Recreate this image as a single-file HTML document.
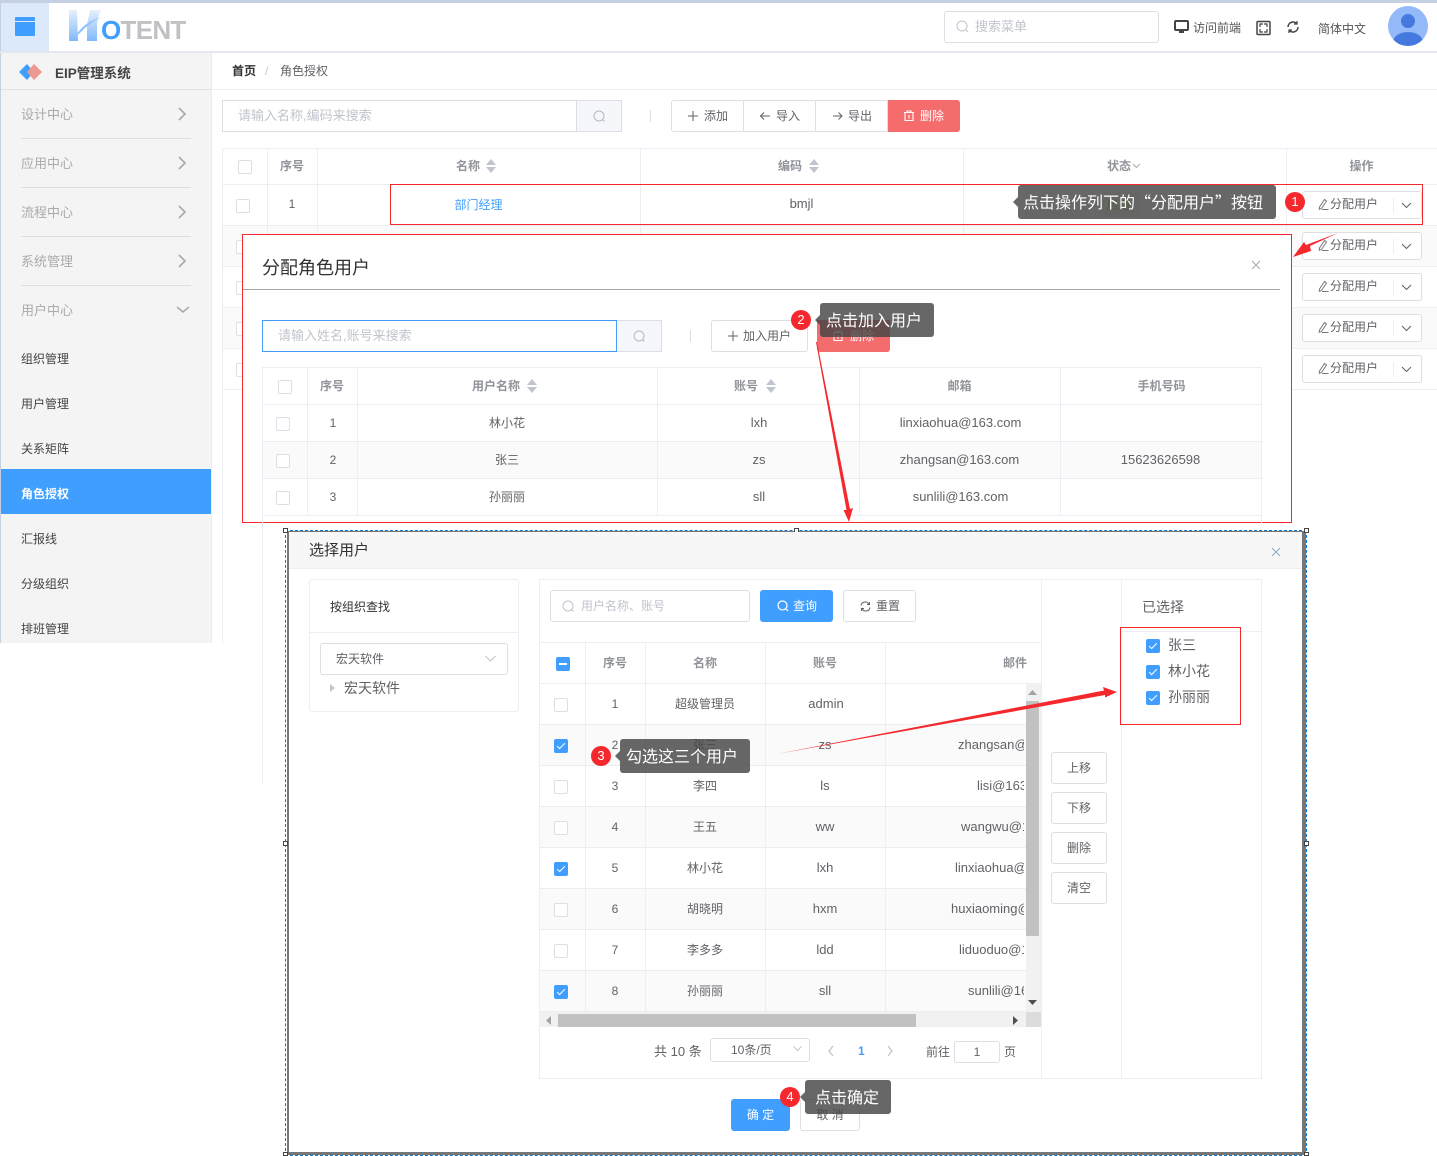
<!DOCTYPE html>
<html lang="zh"><head><meta charset="utf-8"><title>角色授权</title>
<style>
html,body{margin:0;padding:0;background:#fff}
#p{position:relative;width:1437px;height:1156px;overflow:hidden;background:#fff;font:13px/20px "Liberation Sans","Noto Sans CJK SC",sans-serif;color:#606266}
#p div,#p span.a{position:absolute;box-sizing:border-box}
.t{white-space:nowrap}
.c{text-align:center;white-space:nowrap}
.b{font-weight:bold;color:#909399}
.h{background:#ebeef5;height:1px}
.v{background:#ebeef5;width:1px}
.ck{width:14px;height:14px;border:1px solid #dcdfe6;border-radius:2px;background:#fff}
.on{background:#409eff;border-color:#409eff}
.on:after{content:"";position:absolute;left:4px;top:1px;width:3px;height:7px;border:solid #fff;border-width:0 1px 1px 0;transform:rotate(45deg)}
.btn{border:1px solid #dcdfe6;border-radius:3px;background:#fff;text-align:center;white-space:nowrap}
.tip{background:rgba(70,70,70,.82);color:#fff;border-radius:3px;font:16px/32px "Noto Sans CJK SC",sans-serif;white-space:nowrap;padding-left:6px}
.tip:before{content:"";position:absolute;left:-5px;top:50%;margin-top:-5px;border:5px solid transparent;border-left:0;border-right-color:rgba(70,70,70,.82)}
.num{width:20px;height:20px;border-radius:50%;background:#f5282d;color:#fff;text-align:center;line-height:20px;font-size:13px}
.red{border:1px solid #f5282d}
svg{position:absolute;overflow:visible}
.sort{width:10px;height:14px}
.sort:before{content:"";position:absolute;left:0;top:0;border:5px solid transparent;border-top:0;border-bottom:6px solid #c0c4cc}
.sort:after{content:"";position:absolute;left:0;top:8px;border:5px solid transparent;border-bottom:0;border-top:6px solid #c0c4cc}
.ob{left:1302px;width:120px;height:28px;border:1px solid #dcdfe6;border-radius:3px;background:#fff}
</style></head><body><div id="p">

<!-- top -->
<div style="left:0;top:0;width:1437px;height:3px;background:#c5d0e3"></div>
<div style="left:0;top:3px;width:1px;height:640px;background:#c5d0e3"></div>
<div style="left:1px;top:3px;width:48px;height:48px;background:#dce9fb"></div>
<div style="left:15px;top:17px;width:20px;height:19px;background:#409eff;border-radius:1px"></div>
<div style="left:15px;top:21px;width:20px;height:1px;background:#dce9fb"></div>
<svg style="left:68px;top:9px" width="34" height="33" viewBox="0 0 34 33"><defs><linearGradient id="g" x1="0" y1="0" x2="0" y2="1"><stop offset="0" stop-color="#e6f0fc"/><stop offset="1" stop-color="#7fb9fa"/></linearGradient></defs><path d="M1 32V1h8l1 31z" fill="url(#g)"/><path d="M19 32V15q2-8 3-14h11q-3 6-4 14v17z" fill="url(#g)"/><path d="M8 27Q14 14 34 8 22 13 12 24z" fill="#8fc2fb"/></svg>
<div class="t" style="left:101px;top:12px;line-height:36px;font-size:26px;font-weight:bold;color:#bfc1c4;letter-spacing:-.7px"><span style="color:#409eff">O</span>TENT</div>
<div style="left:0;top:51px;width:1437px;height:2px;background:#e4e7ed"></div>

<div style="left:944px;top:11px;width:215px;height:32px;border:1px solid #dcdfe6;border-radius:3px"></div>
<svg style="left:956px;top:20px" width="14" height="14" fill="none" stroke="#c0c4cc"><circle cx="6" cy="6" r="5"/><path d="M10 10l2 2"/></svg>
<div class="t" style="left:975px;top:17px;color:#c0c4cc">搜索菜单</div>
<svg style="left:1174px;top:19px" width="16" height="16" fill="none"><rect x="1" y="2" width="13" height="9" rx="1" stroke="#444" stroke-width="2"/><path d="M5 13h5" stroke="#444" stroke-width="2"/></svg>
<div class="t" style="left:1193px;top:18px;font-size:12px;color:#555">访问前端</div>
<svg style="left:1256px;top:20px" width="16" height="16" fill="none" stroke="#444"><rect x="1" y="1.500" width="13" height="13" rx="1" stroke-width="1.500"/><path d="M4 7V4h3M11 7V4H8M4 9v3h3M11 9v3H8" stroke-width="1.200"/></svg>
<svg style="left:1286px;top:20px" width="15" height="15" fill="none" stroke="#444" stroke-width="1.500"><path d="M2 7a5 5 0 0 1 9-3M12 7a5 5 0 0 1-9 3"/><path d="M11 1v3H8M3 13v-3h3" stroke-width="1.200"/></svg>
<div class="t" style="left:1318px;top:19px;font-size:12px;color:#555">简体中文</div>
<svg style="left:1388px;top:6px" width="40" height="40" viewBox="0 0 40 40"><clipPath id="av"><circle cx="20" cy="20" r="20"/></clipPath><circle cx="20" cy="20" r="20" fill="#93b9f8"/><g clip-path="url(#av)" fill="#4579e0"><circle cx="20" cy="15" r="7"/><ellipse cx="20" cy="36" rx="15" ry="10"/></g></svg>

<!-- sidebar -->
<div style="left:1px;top:53px;width:210px;height:590px;background:#f4f4f4"></div>
<div style="left:211px;top:53px;width:1px;height:590px;background:#e9ecf2"></div>
<div style="left:1px;top:89px;width:210px;height:1px;background:#dfe1e6"></div>
<svg style="left:18px;top:63px" width="26" height="18" viewBox="0 0 26 18"><path d="M1 9l8-8 7 8-7 8z" fill="#409eff"/><path d="M9 9l7-8 8 8-8 8z" fill="#ec9a90"/></svg>
<div class="t" style="left:55px;top:64px;font-size:13.500px;font-weight:bold;color:#444">EIP管理系统</div>
<div class="t" style="left:21px;top:105px;color:#aaa">设计中心</div>
<div class="t" style="left:21px;top:154px;color:#aaa">应用中心</div>
<div class="t" style="left:21px;top:203px;color:#aaa">流程中心</div>
<div class="t" style="left:21px;top:252px;color:#aaa">系统管理</div>
<div class="t" style="left:21px;top:301px;color:#aaa">用户中心</div>
<div style="left:21px;top:138px;width:170px;height:1px;background:#dedede"></div>
<div style="left:21px;top:187px;width:170px;height:1px;background:#dedede"></div>
<div style="left:21px;top:236px;width:170px;height:1px;background:#dedede"></div>
<div style="left:21px;top:285px;width:170px;height:1px;background:#dedede"></div>
<svg style="left:177px;top:107px" width="12" height="210" fill="none" stroke="#aaa" stroke-width="1.600"><path d="M2 1l6 6-6 6M2 50l6 6-6 6M2 99l6 6-6 6M2 148l6 6-6 6M0 200l6 5 6-5"/></svg>
<div class="t" style="left:21px;top:349px;font-size:12px;color:#444">组织管理</div>
<div class="t" style="left:21px;top:394px;font-size:12px;color:#444">用户管理</div>
<div class="t" style="left:21px;top:439px;font-size:12px;color:#444">关系矩阵</div>
<div style="left:1px;top:469px;width:210px;height:45px;background:#409eff"></div>
<div class="t" style="left:21px;top:484px;font-size:12px;color:#fff;font-weight:bold">角色授权</div>
<div class="t" style="left:21px;top:529px;font-size:12px;color:#444">汇报线</div>
<div class="t" style="left:21px;top:574px;font-size:12px;color:#444">分级组织</div>
<div class="t" style="left:21px;top:619px;font-size:12px;color:#444">排班管理</div>

<!-- breadcrumb -->
<div style="left:212px;top:89px;width:1225px;height:1px;background:#ebeef5"></div>
<div class="t" style="left:232px;top:61px;font-size:12px;font-weight:bold;color:#303133">首页</div>
<div class="t" style="left:265px;top:61px;font-size:12px;color:#c0c4cc">/</div>
<div class="t" style="left:280px;top:61px;font-size:12px;color:#606266">角色授权</div>

<!-- toolbar -->
<div style="left:222px;top:100px;width:400px;height:32px;border:1px solid #dcdfe6"></div>
<div style="left:576px;top:100px;width:46px;height:32px;border:1px solid #dcdfe6;background:#f5f7fa"></div>
<svg style="left:593px;top:110px" width="14" height="14" fill="none" stroke="#b5b9c0"><circle cx="6" cy="6" r="5"/><path d="M9.500 9.500l2 2"/></svg>
<div class="t" style="left:238px;top:106px;color:#c0c4cc">请输入名称,编码来搜索</div>
<div style="left:650px;top:110px;width:1px;height:12px;background:#dcdfe6"></div>
<div class="btn" style="left:671px;top:100px;width:73px;height:32px;border-radius:3px 0 0 3px"></div>
<div class="btn" style="left:743px;top:100px;width:73px;height:32px;border-radius:0"></div>
<div class="btn" style="left:815px;top:100px;width:73px;height:32px;border-radius:0"></div>
<div style="left:888px;top:100px;width:72px;height:32px;background:#f56c6c;border-radius:0 3px 3px 0"></div>
<div class="t" style="left:704px;top:106px;font-size:12px">添加</div>
<div class="t" style="left:776px;top:106px;font-size:12px">导入</div>
<div class="t" style="left:848px;top:106px;font-size:12px">导出</div>
<div class="t" style="left:920px;top:106px;font-size:12px;color:#fff">删除</div>
<svg style="left:0;top:0" width="1437" height="400" fill="none" stroke="#606266"><path d="M693 111v10M688 116h10M770 116h-9M764 112.500l-3.500 3.500 3.500 3.500M833 116h9M838.500 112.500l3.500 3.500-3.500 3.500"/><path d="M904 112.500h10M907 112.500v-1.500h4v1.500M905 113v7.500h8V113M909 115v3.500" stroke="#fff" stroke-width="1.100"/></svg>

<!-- main table -->
<div class="h" style="left:222px;top:148px;width:1215px"></div>
<div class="h" style="left:222px;top:184px;width:1215px"></div>
<div style="left:222px;top:226px;width:1215px;height:41px;background:#fafafa"></div>
<div style="left:222px;top:308px;width:1215px;height:41px;background:#fafafa"></div>
<div class="h" style="left:222px;top:225px;width:1215px"></div>
<div class="h" style="left:222px;top:266px;width:1215px"></div>
<div class="h" style="left:222px;top:307px;width:1215px"></div>
<div class="h" style="left:222px;top:348px;width:1215px"></div>
<div class="h" style="left:222px;top:389px;width:1215px"></div>
<div class="v" style="left:222px;top:148px;height:495px"></div>
<div class="v" style="left:267px;top:148px;height:241px"></div>
<div class="v" style="left:317px;top:148px;height:241px"></div>
<div class="v" style="left:640px;top:148px;height:86px"></div>
<div class="v" style="left:963px;top:148px;height:86px"></div>
<div class="v" style="left:1286px;top:148px;height:241px"></div>
<div class="ck" style="left:238px;top:160px"></div>
<div class="ck" style="left:236px;top:199px"></div>
<div class="ck" style="left:236px;top:240px"></div>
<div class="ck" style="left:236px;top:281px"></div>
<div class="ck" style="left:236px;top:322px"></div>
<div class="ck" style="left:236px;top:363px"></div>
<div class="c b" style="left:267px;top:156px;width:50px;font-size:12px">序号</div>
<div class="c b" style="left:455px;top:156px;width:26px;font-size:12px">名称</div>
<div class="sort" style="left:486px;top:159px"></div>
<div class="c b" style="left:777px;top:156px;width:26px;font-size:12px">编码</div>
<div class="sort" style="left:809px;top:159px"></div>
<div class="c b" style="left:1106px;top:156px;width:26px;font-size:12px">状态</div>
<svg style="left:1132px;top:163px" width="9" height="6" fill="none" stroke="#aaa"><path d="M1 1l3.500 3.500L8 1"/></svg>
<div class="c b" style="left:1286px;top:156px;width:151px;font-size:12px">操作</div>
<div class="c" style="left:267px;top:194px;width:50px;font-size:12px">1</div>
<div class="c" style="left:317px;top:195px;width:323px;color:#409eff;font-size:12px">部门经理</div>
<div class="c" style="left:640px;top:194px;width:323px">bmjl</div>
<div style="left:1098px;top:193px;width:41px;height:24px;background:#f0f9eb;border-radius:3px"></div>
<div class="c" style="left:1098px;top:193px;width:41px;line-height:24px;color:#67c23a;font-size:12px">启用</div>
<div style="left:1100px;top:232px;width:38px;height:2px;background:#f0f9eb"></div>

<div class="ob" style="top:191px"></div><div class="ob" style="top:232px"></div><div class="ob" style="top:273px"></div><div class="ob" style="top:314px"></div><div class="ob" style="top:355px"></div>
<div class="t" style="left:1330px;top:194px;font-size:12px">分配用户</div>
<div class="t" style="left:1330px;top:235px;font-size:12px">分配用户</div>
<div class="t" style="left:1330px;top:276px;font-size:12px">分配用户</div>
<div class="t" style="left:1330px;top:317px;font-size:12px">分配用户</div>
<div class="t" style="left:1330px;top:358px;font-size:12px">分配用户</div>
<svg style="left:1318px;top:198px" width="12" height="180" fill="none" stroke="#777"><path d="M1.500 9l5-7.500 2 1.500-5 7.500-2.200 .8zM4 11.500h6.500"/><path transform="translate(0 41)" d="M1.500 9l5-7.500 2 1.500-5 7.500-2.200 .8zM4 11.500h6.500"/><path transform="translate(0 82)" d="M1.500 9l5-7.500 2 1.500-5 7.500-2.200 .8zM4 11.500h6.500"/><path transform="translate(0 123)" d="M1.500 9l5-7.500 2 1.500-5 7.500-2.200 .8zM4 11.500h6.500"/><path transform="translate(0 164)" d="M1.500 9l5-7.500 2 1.500-5 7.500-2.200 .8zM4 11.500h6.500"/></svg>
<svg style="left:1393px;top:196px" width="24" height="180" fill="none"><g stroke="#ebeef5"><path d="M.5 2v15M.5 43v15M.5 84v15M.5 125v15M.5 166v15"/></g><g stroke="#606266"><path d="M9 7l4.500 4.500L18 7M9 48l4.500 4.500L18 48M9 89l4.500 4.500L18 89M9 130l4.500 4.500L18 130M9 171l4.500 4.500L18 171"/></g></svg>

<div class="red" style="left:390px;top:184px;width:1033px;height:41px"></div>
<div class="tip" style="left:1018px;top:185px;width:258px;height:34px;padding-left:5px">点击操作列下的“分配用户”按钮</div>
<div class="num" style="left:1285px;top:192px">1</div>

<!-- dialog 1 -->
<div style="left:242px;top:234px;width:1050px;height:289px;background:#fff;border:1px solid #f5282d"></div>
<div style="left:1281px;top:235px;width:10px;height:287px;background:#fff"></div>
<div style="left:243px;top:289px;width:1037px;height:1px;background:#a6a6a6"></div>
<div class="t" style="left:262px;top:256px;font-size:18px;line-height:24px;color:#303133">分配角色用户</div>
<svg style="left:1252px;top:261px" width="8" height="8" stroke="#a9a9a9" fill="none"><path d="M0 0l8 8M8 0L0 8"/></svg>
<div style="left:262px;top:320px;width:355px;height:32px;border:1px solid #409eff"></div>
<div style="left:617px;top:320px;width:45px;height:32px;border:1px solid #dcdfe6;border-left:0;background:#f5f7fa"></div>
<svg style="left:633px;top:330px" width="14" height="14" fill="none" stroke="#b5b9c0"><circle cx="6" cy="6" r="5"/><path d="M9.500 9.500l2 2"/></svg>
<div class="t" style="left:278px;top:326px;color:#c0c4cc">请输入姓名,账号来搜索</div>
<div style="left:690px;top:330px;width:1px;height:12px;background:#dcdfe6"></div>
<div class="btn" style="left:711px;top:320px;width:97px;height:32px"></div>
<div class="t" style="left:743px;top:326px;font-size:12px">加入用户</div>
<svg style="left:728px;top:331px" width="10" height="10" fill="none" stroke="#606266"><path d="M5 0v10M0 5h10"/></svg>
<div style="left:817px;top:320px;width:73px;height:32px;background:#f56c6c;border-radius:0 0 3px 3px"></div>
<div class="t" style="left:850px;top:326px;font-size:12px;color:#fff">删除</div>
<svg style="left:833px;top:330px" width="11" height="11" fill="none" stroke="#fff" stroke-width="1.100"><path d="M0 2.500h10M3 2.500V1h4v1.500M1 3v7.500h8V3M5 5v3.500"/></svg>
<div class="tip" style="left:820px;top:303px;width:114px;height:34px">点击加入用户</div>
<div class="num" style="left:791px;top:310px">2</div>

<div class="h" style="left:262px;top:367px;width:1000px"></div>
<div class="h" style="left:262px;top:404px;width:1000px"></div>
<div style="left:262px;top:442px;width:1000px;height:36px;background:#fafafa"></div>
<div class="h" style="left:262px;top:441px;width:1000px"></div>
<div class="h" style="left:262px;top:478px;width:1000px"></div>
<div class="h" style="left:262px;top:515px;width:1000px"></div>
<div class="v" style="left:262px;top:367px;height:416px"></div>
<div class="v" style="left:307px;top:367px;height:148px"></div>
<div class="v" style="left:357px;top:367px;height:148px"></div>
<div class="v" style="left:657px;top:367px;height:148px"></div>
<div class="v" style="left:859px;top:367px;height:148px"></div>
<div class="v" style="left:1060px;top:367px;height:148px"></div>
<div class="v" style="left:1261px;top:367px;height:156px"></div>
<div class="ck" style="left:278px;top:380px"></div>
<div class="ck" style="left:276px;top:417px"></div>
<div class="ck" style="left:276px;top:454px"></div>
<div class="ck" style="left:276px;top:491px"></div>
<div class="c b" style="left:307px;top:376px;width:50px;font-size:12px">序号</div>
<div class="c b" style="left:470px;top:376px;width:52px;font-size:12px">用户名称</div>
<div class="sort" style="left:527px;top:379px"></div>
<div class="c b" style="left:733px;top:376px;width:26px;font-size:12px">账号</div>
<div class="sort" style="left:766px;top:379px"></div>
<div class="c b" style="left:859px;top:376px;width:201px;font-size:12px">邮箱</div>
<div class="c b" style="left:1061px;top:376px;width:201px;font-size:12px">手机号码</div>
<div class="c" style="left:308px;top:413px;width:50px;font-size:12px">1</div><div class="c" style="left:357px;top:413px;width:300px;font-size:12px">林小花</div><div class="c" style="left:658px;top:413px;width:202px">lxh</div><div class="c" style="left:860px;top:413px;width:201px">linxiaohua@163.com</div>
<div class="c" style="left:308px;top:450px;width:50px;font-size:12px">2</div><div class="c" style="left:357px;top:450px;width:300px;font-size:12px">张三</div><div class="c" style="left:658px;top:450px;width:202px">zs</div><div class="c" style="left:859px;top:450px;width:201px">zhangsan@163.com</div><div class="c" style="left:1060px;top:450px;width:201px">15623626598</div>
<div class="c" style="left:308px;top:487px;width:50px;font-size:12px">3</div><div class="c" style="left:357px;top:487px;width:300px;font-size:12px">孙丽丽</div><div class="c" style="left:658px;top:487px;width:202px">sll</div><div class="c" style="left:860px;top:487px;width:201px">sunlili@163.com</div>

<!-- dialog 2 -->
<div style="left:287px;top:531px;width:1019px;height:624px;background:#fff;border:solid #777;border-width:1px 4px 3px 2px"></div>
<div style="left:285px;top:530px;width:1022px;height:626px;border:1px dashed #0a78d2"></div>
<div style="left:283px;top:528px;width:5px;height:5px;border:1px solid #444;background:#fff"></div>
<div style="left:794px;top:528px;width:5px;height:5px;border:1px solid #444;background:#fff"></div>
<div style="left:1304px;top:528px;width:5px;height:5px;border:1px solid #444;background:#fff"></div>
<div style="left:283px;top:841px;width:5px;height:5px;border:1px solid #444;background:#fff"></div>
<div style="left:1304px;top:841px;width:5px;height:5px;border:1px solid #444;background:#fff"></div>
<div style="left:283px;top:1152px;width:5px;height:4px;border:1px solid #444;background:#fff"></div>
<div style="left:1304px;top:1152px;width:5px;height:4px;border:1px solid #444;background:#fff"></div>
<div style="left:289px;top:532px;width:1013px;height:37px;background:#f7f7f7;border-bottom:1px solid #ebeef5"></div>
<div class="t" style="left:309px;top:541px;font-size:15px;color:#303133">选择用户</div>
<svg style="left:1272px;top:548px" width="8" height="8" stroke="#8fa9c9" fill="none"><path d="M0 0l8 8M8 0L0 8"/></svg>

<div style="left:309px;top:579px;width:210px;height:133px;border:1px solid #ebeef5;border-radius:3px"></div>
<div class="h" style="left:310px;top:632px;width:208px"></div>
<div class="t" style="left:330px;top:597px;font-size:12px;color:#303133">按组织查找</div>
<div style="left:320px;top:643px;width:188px;height:32px;border:1px solid #dcdfe6;border-radius:3px"></div>
<div class="t" style="left:336px;top:649px;font-size:12px">宏天软件</div>
<svg style="left:485px;top:655px" width="11" height="7" fill="none" stroke="#c0c4cc"><path d="M.5 1l5 5 5-5"/></svg>
<svg style="left:330px;top:684px" width="6" height="8"><path d="M0 0l5 4-5 4z" fill="#c0c4cc"/></svg>
<div class="t" style="left:344px;top:678px;font-size:14px">宏天软件</div>

<div style="left:539px;top:579px;width:723px;height:500px;border:1px solid #ebeef5"></div>
<div class="v" style="left:1041px;top:579px;height:500px"></div>
<div class="v" style="left:1121px;top:579px;height:500px"></div>
<div class="h" style="left:1121px;top:631px;width:140px"></div>
<div style="left:550px;top:590px;width:200px;height:32px;border:1px solid #dcdfe6;border-radius:3px"></div>
<svg style="left:562px;top:600px" width="14" height="14" fill="none" stroke="#c0c4cc"><circle cx="6" cy="6" r="5"/><path d="M9.500 9.500l2 2"/></svg>
<div class="t" style="left:581px;top:596px;font-size:12px;color:#c0c4cc">用户名称、账号</div>
<div style="left:760px;top:590px;width:73px;height:32px;background:#409eff;border-radius:3px"></div>
<div class="t" style="left:793px;top:596px;font-size:12px;color:#fff">查询</div>
<svg style="left:777px;top:600px" width="12" height="12" fill="none" stroke="#fff" stroke-width="1.200"><circle cx="5.500" cy="5.500" r="4.500"/><path d="M9 9l2 2"/></svg>
<div class="btn" style="left:843px;top:590px;width:73px;height:32px"></div>
<div class="t" style="left:876px;top:596px;font-size:12px">重置</div>
<svg style="left:860px;top:601px" width="11" height="11" fill="none" stroke="#606266"><path d="M1 4.500a4.200 4.200 0 0 1 8-1M10 6.500a4.200 4.200 0 0 1-8 1"/><path d="M9.500 1v2.500H7M1.500 10V7.500H4"/></svg>

<div class="h" style="left:540px;top:642px;width:501px"></div>
<div class="h" style="left:540px;top:683px;width:501px"></div>
<div style="left:540px;top:725px;width:486px;height:41px;background:#fafafa"></div>
<div style="left:540px;top:807px;width:486px;height:41px;background:#fafafa"></div>
<div style="left:540px;top:889px;width:486px;height:41px;background:#fafafa"></div>
<div style="left:540px;top:971px;width:486px;height:41px;background:#fafafa"></div>
<div class="h" style="left:540px;top:724px;width:486px"></div>
<div class="h" style="left:540px;top:765px;width:486px"></div>
<div class="h" style="left:540px;top:806px;width:486px"></div>
<div class="h" style="left:540px;top:847px;width:486px"></div>
<div class="h" style="left:540px;top:888px;width:486px"></div>
<div class="h" style="left:540px;top:929px;width:486px"></div>
<div class="h" style="left:540px;top:970px;width:486px"></div>
<div class="h" style="left:540px;top:1011px;width:486px"></div>
<div class="v" style="left:585px;top:642px;height:370px"></div>
<div class="v" style="left:645px;top:642px;height:370px"></div>
<div class="v" style="left:765px;top:642px;height:370px"></div>
<div class="v" style="left:885px;top:642px;height:370px"></div>
<div class="ck" style="left:556px;top:657px;background:#409eff;border-color:#409eff"></div>
<div style="left:559px;top:663px;width:8px;height:2px;background:#fff"></div>
<div class="c b" style="left:585px;top:653px;width:60px;font-size:12px">序号</div>
<div class="c b" style="left:645px;top:653px;width:120px;font-size:12px">名称</div>
<div class="c b" style="left:765px;top:653px;width:120px;font-size:12px">账号</div>
<div class="t b" style="right:410px;top:653px;font-size:12px">邮件</div>

<div class="ck" style="left:554px;top:698px"></div>
<div class="ck on" style="left:554px;top:739px"></div>
<div class="ck" style="left:554px;top:780px"></div>
<div class="ck" style="left:554px;top:821px"></div>
<div class="ck on" style="left:554px;top:862px"></div>
<div class="ck" style="left:554px;top:903px"></div>
<div class="ck" style="left:554px;top:944px"></div>
<div class="ck on" style="left:554px;top:985px"></div>

<div class="c" style="left:585px;top:694px;width:60px;font-size:12px">1</div><div class="c" style="left:645px;top:694px;width:120px;font-size:12px">超级管理员</div><div class="c" style="left:766px;top:694px;width:120px">admin</div>
<div class="c" style="left:585px;top:735px;width:60px;font-size:12px">2</div><div class="c" style="left:645px;top:735px;width:120px;font-size:12px">张三</div><div class="c" style="left:765px;top:735px;width:120px">zs</div>
<div class="c" style="left:585px;top:776px;width:60px;font-size:12px">3</div><div class="c" style="left:645px;top:776px;width:120px;font-size:12px">李四</div><div class="c" style="left:765px;top:776px;width:120px">ls</div>
<div class="c" style="left:585px;top:817px;width:60px;font-size:12px">4</div><div class="c" style="left:645px;top:817px;width:120px;font-size:12px">王五</div><div class="c" style="left:765px;top:817px;width:120px">ww</div>
<div class="c" style="left:585px;top:858px;width:60px;font-size:12px">5</div><div class="c" style="left:645px;top:858px;width:120px;font-size:12px">林小花</div><div class="c" style="left:765px;top:858px;width:120px">lxh</div>
<div class="c" style="left:585px;top:899px;width:60px;font-size:12px">6</div><div class="c" style="left:645px;top:899px;width:120px;font-size:12px">胡晓明</div><div class="c" style="left:765px;top:899px;width:120px">hxm</div>
<div class="c" style="left:585px;top:940px;width:60px;font-size:12px">7</div><div class="c" style="left:645px;top:940px;width:120px;font-size:12px">李多多</div><div class="c" style="left:765px;top:940px;width:120px">ldd</div>
<div class="c" style="left:585px;top:981px;width:60px;font-size:12px">8</div><div class="c" style="left:645px;top:981px;width:120px;font-size:12px">孙丽丽</div><div class="c" style="left:765px;top:981px;width:120px">sll</div>

<div style="left:886px;top:684px;width:138px;height:328px;overflow:hidden">
<div class="t" style="left:72px;top:51px">zhangsan@163.com</div>
<div class="t" style="left:91px;top:92px">lisi@163.com</div>
<div class="t" style="left:75px;top:133px">wangwu@163.com</div>
<div class="t" style="left:69px;top:174px">linxiaohua@163.com</div>
<div class="t" style="left:65px;top:215px">huxiaoming@163.com</div>
<div class="t" style="left:73px;top:256px">liduoduo@163.com</div>
<div class="t" style="left:82px;top:297px">sunlili@163.com</div>
</div>
<div style="left:1026px;top:684px;width:15px;height:343px;background:#f1f1f1"></div>
<div style="left:1026px;top:701px;width:13px;height:235px;background:#c1c1c1"></div>
<svg style="left:1028px;top:690px" width="9" height="5"><path d="M0 5l4.500-5L9 5z" fill="#a3a3a3"/></svg>
<svg style="left:1028px;top:1000px" width="9" height="5"><path d="M0 0l4.500 5L9 0z" fill="#505050"/></svg>
<div style="left:540px;top:1012px;width:486px;height:15px;background:#f1f1f1"></div>
<div style="left:558px;top:1014px;width:358px;height:13px;background:#c1c1c1"></div>
<div style="left:1026px;top:1012px;width:15px;height:15px;background:#dcdcdc"></div>
<svg style="left:546px;top:1016px" width="5" height="9"><path d="M5 0L0 4.500 5 9z" fill="#a3a3a3"/></svg>
<svg style="left:1013px;top:1016px" width="5" height="9"><path d="M0 0l5 4.500L0 9z" fill="#505050"/></svg>

<div class="t" style="left:654px;top:1042px">共 10 条</div>
<div class="btn" style="left:710px;top:1038px;width:100px;height:24px;line-height:22px;text-align:left;padding-left:20px;font-size:12px">10条/页</div>
<svg style="left:793px;top:1046px" width="9" height="6" fill="none" stroke="#c0c4cc"><path d="M.5 .5l4 4 4-4"/></svg>
<svg style="left:828px;top:1046px" width="6" height="10" fill="none" stroke="#c0c4cc" stroke-width="1.300"><path d="M5 0L1 5l4 5"/></svg>
<div class="t" style="left:858px;top:1041px;color:#409eff;font-weight:bold;font-size:12px">1</div>
<svg style="left:887px;top:1046px" width="6" height="10" fill="none" stroke="#c0c4cc" stroke-width="1.300"><path d="M1 0l4 5-4 5"/></svg>
<div class="t" style="left:926px;top:1042px;font-size:12px">前往</div>
<div class="btn" style="left:954px;top:1041px;width:46px;height:22px;line-height:20px;font-size:12px">1</div>
<div class="t" style="left:1004px;top:1042px;font-size:12px">页</div>

<div class="t" style="left:1142px;top:597px;font-size:14px;color:#606266">已选择</div>
<div class="ck on" style="left:1146px;top:639px"></div>
<div class="ck on" style="left:1146px;top:665px"></div>
<div class="ck on" style="left:1146px;top:691px"></div>
<div class="t" style="left:1168px;top:635px;font-size:14px">张三</div>
<div class="t" style="left:1168px;top:661px;font-size:14px">林小花</div>
<div class="t" style="left:1168px;top:687px;font-size:14px">孙丽丽</div>
<div class="red" style="left:1120px;top:627px;width:121px;height:98px"></div>

<div class="btn" style="left:1051px;top:752px;width:56px;height:32px;line-height:30px;font-size:12px">上移</div>
<div class="btn" style="left:1051px;top:792px;width:56px;height:32px;line-height:30px;font-size:12px">下移</div>
<div class="btn" style="left:1051px;top:832px;width:56px;height:32px;line-height:30px;font-size:12px">删除</div>
<div class="btn" style="left:1051px;top:872px;width:56px;height:32px;line-height:30px;font-size:12px">清空</div>

<div class="c" style="left:731px;top:1099px;width:59px;height:32px;line-height:32px;background:#409eff;border-radius:3px;color:#fff;font-size:12px">确 定</div>
<div class="btn" style="left:800px;top:1099px;width:60px;height:32px;line-height:30px;font-size:12px">取 消</div>

<div class="tip" style="left:620px;top:739px;width:130px;height:34px">勾选这三个用户</div>
<div class="num" style="left:591px;top:746px">3</div>
<div class="tip" style="left:805px;top:1080px;width:86px;height:34px;padding-left:10px">点击确定</div>
<div class="num" style="left:780px;top:1087px">4</div>

<!-- arrows -->
<svg style="left:0;top:0" width="1437" height="1156">
<path d="M1338 233L1310 246 1311 251 1293 257 1304 242 1306 245z" fill="#f5282d"/>
<path d="M816 342L817 342 850 509 853 508 849 522 843.500 510 846.500 510z" fill="#f5282d"/>
<path d="M777 754L1104 690.500 1103 687 1117 692 1105 697.500 1105 695z" fill="#f5282d"/>
</svg>
</div></body></html>
